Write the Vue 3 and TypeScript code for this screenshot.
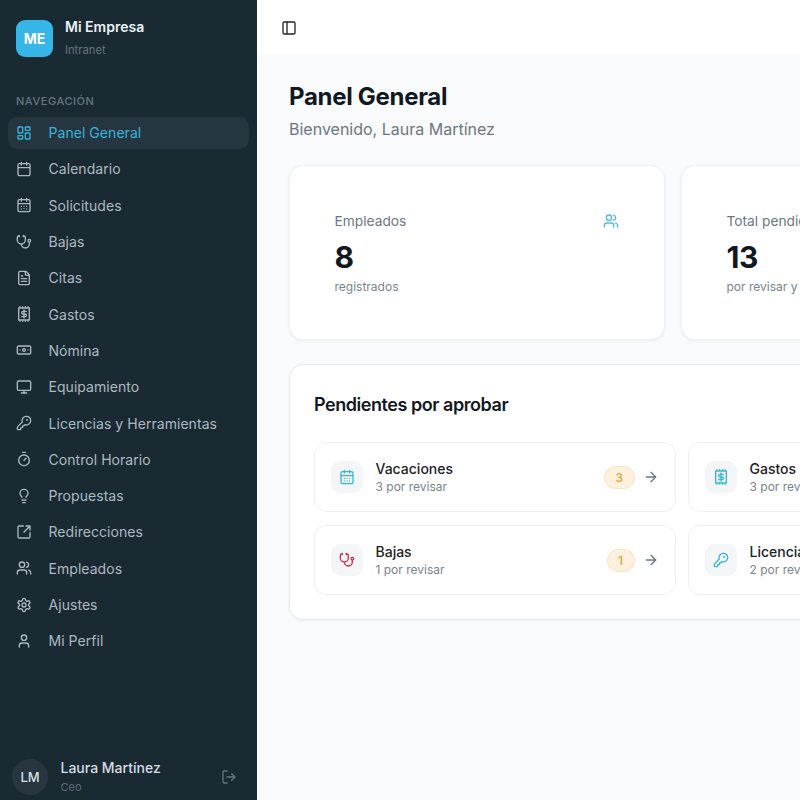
<script setup lang="ts">
const circle = (cx: number, cy: number, r: number) =>
  `M${cx - r} ${cy}a${r} ${r} 0 1 0 ${r * 2} 0a${r} ${r} 0 1 0 ${-r * 2} 0Z`

const rect = (x: number, y: number, w: number, h: number, r: number) =>
  `M${x + r} ${y}h${w - r * 2}a${r} ${r} 0 0 1 ${r} ${r}v${h - r * 2}a${r} ${r} 0 0 1 ${-r} ${r}h${-(w - r * 2)}a${r} ${r} 0 0 1 ${-r} ${-r}v${-(h - r * 2)}a${r} ${r} 0 0 1 ${r} ${-r}Z`

const icons: Record<string, string> = {
  dashboard: rect(3, 3, 7, 9, 1) + rect(14, 3, 7, 5, 1) + rect(14, 12, 7, 9, 1) + rect(3, 16, 7, 5, 1),
  calendar: 'M8 2v4M16 2v4M3 10h18' + rect(3, 4, 18, 18, 2),
  days: 'M8 2v4M16 2v4M3 10h18M8 14h.01M12 14h.01M16 14h.01M8 18h.01M12 18h.01M16 18h.01' + rect(3, 4, 18, 18, 2),
  stethoscope: 'M11 2v2M5 2v2M5 3H4a2 2 0 0 0-2 2v4a6 6 0 0 0 12 0V5a2 2 0 0 0-2-2h-1M8 15a6 6 0 0 0 12 0v-3' + circle(20, 10, 2),
  file: 'M15 2H6a2 2 0 0 0-2 2v16a2 2 0 0 0 2 2h12a2 2 0 0 0 2-2V7ZM14 2v4a2 2 0 0 0 2 2h4M10 9H8M16 13H8M16 17H8',
  receipt: rect(4, 3, 16, 18, 0) + 'M6 1h.01M10 1h.01M14 1h.01M18 1h.01M6 23h.01M10 23h.01M14 23h.01M18 23h.01M15.5 8h-5a2 2 0 1 0 0 4h3a2 2 0 1 1 0 4h-5M12 18v-12',
  banknote: rect(2, 6, 20, 12, 2) + circle(12, 12, 2) + 'M6 12h.01M18 12h.01',
  monitor: rect(2, 3, 20, 14, 2) + 'M8 21h8M12 17v4',
  key: 'M2.586 17.414A2 2 0 0 0 2 18.828V21a1 1 0 0 0 1 1h3a1 1 0 0 0 1-1v-1a1 1 0 0 1 1-1h1a1 1 0 0 0 1-1v-1a1 1 0 0 1 1-1h.172a2 2 0 0 0 1.414-.586l.814-.814a6.5 6.5 0 1 0-4-4z' + circle(16.5, 7.5, 0.5),
  timer: 'M10 2h4M12 14l3-3' + circle(12, 14, 8),
  bulb: 'M15 14c.2-1 .7-1.7 1.5-2.5 1-.9 1.5-2.2 1.5-3.5A6 6 0 0 0 6 8c0 1 .2 2.2 1.5 3.5.7.7 1.3 1.5 1.5 2.5M9 18h6M10 22h4',
  external: 'M21 13v6a2 2 0 0 1-2 2H5a2 2 0 0 1-2-2V5a2 2 0 0 1 2-2h6M21 3l-9 9M15 3h6v6',
  users: 'M16 21v-2a4 4 0 0 0-4-4H6a4 4 0 0 0-4 4v2M16 3.128a4 4 0 0 1 0 7.744M22 21v-2a4 4 0 0 0-3-3.87' + circle(9, 7, 4),
  settings: 'M12.22 2h-.44a2 2 0 0 0-2 2v.18a2 2 0 0 1-1 1.73l-.43.25a2 2 0 0 1-2 0l-.15-.08a2 2 0 0 0-2.73.73l-.22.38a2 2 0 0 0 .73 2.73l.15.1a2 2 0 0 1 1 1.72v.51a2 2 0 0 1-1 1.74l-.15.09a2 2 0 0 0-.73 2.73l.22.38a2 2 0 0 0 2.73.73l.15-.08a2 2 0 0 1 2 0l.43.25a2 2 0 0 1 1 1.73V20a2 2 0 0 0 2 2h.44a2 2 0 0 0 2-2v-.18a2 2 0 0 1 1-1.73l.43-.25a2 2 0 0 1 2 0l.15.08a2 2 0 0 0 2.73-.73l.22-.39a2 2 0 0 0-.73-2.73l-.15-.08a2 2 0 0 1-1-1.74v-.5a2 2 0 0 1 1-1.74l.15-.09a2 2 0 0 0 .73-2.73l-.22-.38a2 2 0 0 0-2.73-.73l-.15.08a2 2 0 0 1-2 0l-.43-.25a2 2 0 0 1-1-1.73V4a2 2 0 0 0-2-2z' + circle(12, 12, 3),
  user: 'M19 21v-2a4 4 0 0 0-4-4H9a4 4 0 0 0-4 4v2' + circle(12, 7, 4),
  logout: 'M9 21H5a2 2 0 0 1-2-2V5a2 2 0 0 1 2-2h4M16 17l5-5-5-5M21 12H9',
  panel: rect(3, 3, 18, 18, 2) + 'M9 3v18',
  arrow: 'M5 12h14M12 5l7 7-7 7',
}

const nav = [
  { label: 'Panel General', icon: 'dashboard', active: true },
  { label: 'Calendario', icon: 'calendar' },
  { label: 'Solicitudes', icon: 'days' },
  { label: 'Bajas', icon: 'stethoscope' },
  { label: 'Citas', icon: 'file' },
  { label: 'Gastos', icon: 'receipt' },
  { label: 'Nómina', icon: 'banknote' },
  { label: 'Equipamiento', icon: 'monitor' },
  { label: 'Licencias y Herramientas', icon: 'key' },
  { label: 'Control Horario', icon: 'timer' },
  { label: 'Propuestas', icon: 'bulb' },
  { label: 'Redirecciones', icon: 'external' },
  { label: 'Empleados', icon: 'users' },
  { label: 'Ajustes', icon: 'settings' },
  { label: 'Mi Perfil', icon: 'user' },
]

const stats = [
  { label: 'Empleados', value: '8', note: 'registrados', icon: 'users' },
  { label: 'Total pendientes', value: '13', note: 'por revisar y aprobar', icon: 'days' },
]

const pending = [
  { label: 'Vacaciones', note: '3 por revisar', count: 3, icon: 'days', tone: 'cyan' },
  { label: 'Gastos', note: '3 por revisar', count: 3, icon: 'receipt', tone: 'cyan' },
  { label: 'Bajas', note: '1 por revisar', count: 1, icon: 'stethoscope', tone: 'red' },
  { label: 'Licencias', note: '2 por revisar', count: 2, icon: 'key', tone: 'cyan' },
]
</script>

<template>
  <div class="app">
    <aside class="sidebar">
      <div class="brand">
        <div class="brand-logo">ME</div>
        <div class="brand-text">
          <strong>Mi Empresa</strong>
          <span>Intranet</span>
        </div>
      </div>

      <p class="nav-title">NAVEGACIÓN</p>
      <nav class="nav">
        <a v-for="item in nav" :key="item.label" class="nav-item" :class="{ 'nav-item--active': item.active }">
          <svg class="icon" viewBox="0 0 24 24"><path :d="icons[item.icon]" /></svg>
          <span>{{ item.label }}</span>
        </a>
      </nav>

      <div class="user">
        <div class="avatar">LM</div>
        <div class="user-text">
          <strong>Laura Martínez</strong>
          <span>Ceo</span>
        </div>
        <svg class="icon logout" viewBox="0 0 24 24"><path :d="icons.logout" /></svg>
      </div>
    </aside>

    <main class="main">
      <header class="topbar">
        <svg class="icon toggle" viewBox="0 0 24 24"><path :d="icons.panel" /></svg>
      </header>

      <div class="content">
        <h1>Panel General</h1>
        <p class="subtitle">Bienvenido, Laura Martínez</p>

        <div class="stats">
          <div v-for="stat in stats" :key="stat.label" class="stat">
            <div class="stat-head">
              <span>{{ stat.label }}</span>
              <svg class="icon stat-icon" viewBox="0 0 24 24"><path :d="icons[stat.icon]" /></svg>
            </div>
            <div class="stat-value">{{ stat.value }}</div>
            <div class="stat-note">{{ stat.note }}</div>
          </div>
        </div>

        <section class="panel">
          <h2>Pendientes por aprobar</h2>
          <div class="pending">
            <div v-for="row in pending" :key="row.label" class="row">
              <div class="row-icon" :class="`row-icon--${row.tone}`">
                <svg class="icon" viewBox="0 0 24 24"><path :d="icons[row.icon]" /></svg>
              </div>
              <div class="row-text">
                <strong>{{ row.label }}</strong>
                <span>{{ row.note }}</span>
              </div>
              <span class="badge">{{ row.count }}</span>
              <svg class="icon arrow" viewBox="0 0 24 24"><path :d="icons.arrow" /></svg>
            </div>
          </div>
        </section>
      </div>
    </main>
  </div>
</template>

<style>
html, body {
  margin: 0;
  background: #f8fafb;
}
</style>

<style scoped>
.app {
  display: flex;
  width: 800px;
  height: 800px;
  overflow: hidden;
  font-family: Inter, "Liberation Sans", sans-serif;
  color: #12181f;
}
.icon {
  width: 16px;
  height: 16px;
  flex: none;
  fill: none;
  stroke: currentColor;
  stroke-width: 2;
  stroke-linecap: round;
  stroke-linejoin: round;
}
.sidebar {
  width: 257px;
  flex: none;
  display: flex;
  flex-direction: column;
  background: #1a2a33;
  box-sizing: border-box;
  padding: 20px 8px 0;
}
.brand {
  display: flex;
  gap: 12px;
  padding: 0 8px;
  height: 37px;
}
.brand-logo {
  width: 37px;
  height: 37px;
  border-radius: 9px;
  background: #35b6e6;
  color: #fff;
  font-size: 14px;
  font-weight: 700;
  display: flex;
  align-items: center;
  justify-content: center;
}
.brand-text {
  display: flex;
  flex-direction: column;
  gap: 9px;
}
.brand-text strong {
  color: #eef2f5;
  font-size: 14px;
  font-weight: 600;
  line-height: 14px;
}
.brand-text span {
  color: #66747f;
  font-size: 11.2px;
  line-height: 14px;
}
.nav-title {
  margin: 37px 8px 8.5px;
  color: #66747f;
  font-size: 11px;
  font-weight: 500;
  letter-spacing: 0.55px;
  line-height: 14px;
}
.nav {
  display: flex;
  flex-direction: column;
  gap: 4px;
}
.nav-item {
  display: flex;
  align-items: center;
  gap: 16.5px;
  height: 32.3px;
  padding: 0 8px;
  border-radius: 9px;
  color: #adb9c1;
  font-size: 14px;
  letter-spacing: 0.05px;
}
.nav-item--active {
  background: #253641;
  color: #38b3dc;
}
.user {
  margin-top: auto;
  display: flex;
  align-items: center;
  height: 37px;
  padding: 0 4px 5px;
  gap: 12.5px;
}
.avatar {
  width: 36px;
  height: 36px;
  border-radius: 50%;
  background: #28363f;
  color: #d9e0e5;
  font-size: 13px;
  font-weight: 500;
  display: flex;
  align-items: center;
  justify-content: center;
}
.user-text {
  flex: 1;
  display: flex;
  flex-direction: column;
  gap: 4px;
}
.user-text strong {
  color: #d5dde3;
  font-size: 14px;
  font-weight: 500;
  line-height: 17px;
}
.user-text span {
  color: #5e6c77;
  font-size: 11px;
  line-height: 14px;
}
.logout {
  color: #66747f;
  margin-right: 8px;
}
.main {
  flex: 1;
  min-width: 0;
  display: flex;
  flex-direction: column;
}
.topbar {
  height: 55px;
  flex: none;
  display: flex;
  align-items: center;
  padding-left: 23.5px;
  background: #fff;
  box-sizing: border-box;
}
.toggle {
  color: #20262c;
}
.content {
  padding: 26px 0 0 32px;
}
h1 {
  margin: 0;
  font-size: 24px;
  font-weight: 700;
  line-height: 32px;
  letter-spacing: -0.3px;
  color: #12181f;
}
.subtitle {
  margin: 4px 0 0;
  color: #6d7781;
  font-size: 16px;
  line-height: 24px;
}
.stats {
  display: grid;
  grid-template-columns: repeat(3, 376px);
  gap: 16px;
  margin-top: 24px;
}
.stat {
  height: 175px;
  box-sizing: border-box;
  padding: 45px 45px 45px 44.5px;
  background: #fff;
  border: 1px solid #eef1f3;
  border-radius: 14px;
  box-shadow: 0 1px 3px rgba(20, 30, 40, 0.06);
}
.stat-head {
  display: flex;
  justify-content: space-between;
  align-items: center;
  color: #6d7781;
  font-size: 13.75px;
  line-height: 20px;
}
.stat-icon {
  color: #4dbfdc;
}
.stat-value {
  margin-top: 8px;
  font-size: 30px;
  font-weight: 700;
  line-height: 36px;
  letter-spacing: -0.5px;
}
.stat-note {
  margin-top: 4px;
  color: #7a848d;
  font-size: 12px;
  line-height: 16px;
}
.panel {
  width: 1160px;
  height: 256px;
  box-sizing: border-box;
  margin-top: 24px;
  padding: 24px;
  background: #fff;
  border: 1px solid #e6ebee;
  border-radius: 14px;
  box-shadow: 0 1px 3px rgba(20, 30, 40, 0.05);
}
h2 {
  margin: 3.5px 0 0;
  font-size: 18px;
  font-weight: 600;
  line-height: 24px;
  letter-spacing: -0.45px;
}
.pending {
  display: grid;
  grid-template-columns: repeat(2, 362px);
  gap: 13px 12px;
  margin-top: 25.5px;
}
.row {
  height: 70px;
  box-sizing: border-box;
  display: flex;
  align-items: center;
  padding: 0 16px;
  gap: 12.5px;
  border: 1px solid #eef1f3;
  border-radius: 12px;
}
.row-icon {
  width: 32px;
  height: 32px;
  border-radius: 9px;
  background: #f4f5f7;
  display: flex;
  align-items: center;
  justify-content: center;
}
.row-icon--cyan {
  color: #35b6d8;
}
.row-icon--red {
  color: #c8324a;
}
.row-text {
  flex: 1;
  display: flex;
  flex-direction: column;
}
.row-text strong {
  font-size: 14px;
  font-weight: 500;
  line-height: 20px;
  color: #1b2228;
}
.row-text span {
  color: #7a848d;
  font-size: 12px;
  line-height: 16px;
}
.badge {
  box-sizing: border-box;
  padding: 0 10.5px;
  height: 23px;
  border-radius: 12px;
  background: #fdf0dd;
  border: 1px solid #f6e2c3;
  color: #e8a13c;
  font-size: 12px;
  font-weight: 500;
  line-height: 21px;
  text-align: center;
}
.arrow {
  color: #6d7781;
  margin-left: -4px;
}
</style>
